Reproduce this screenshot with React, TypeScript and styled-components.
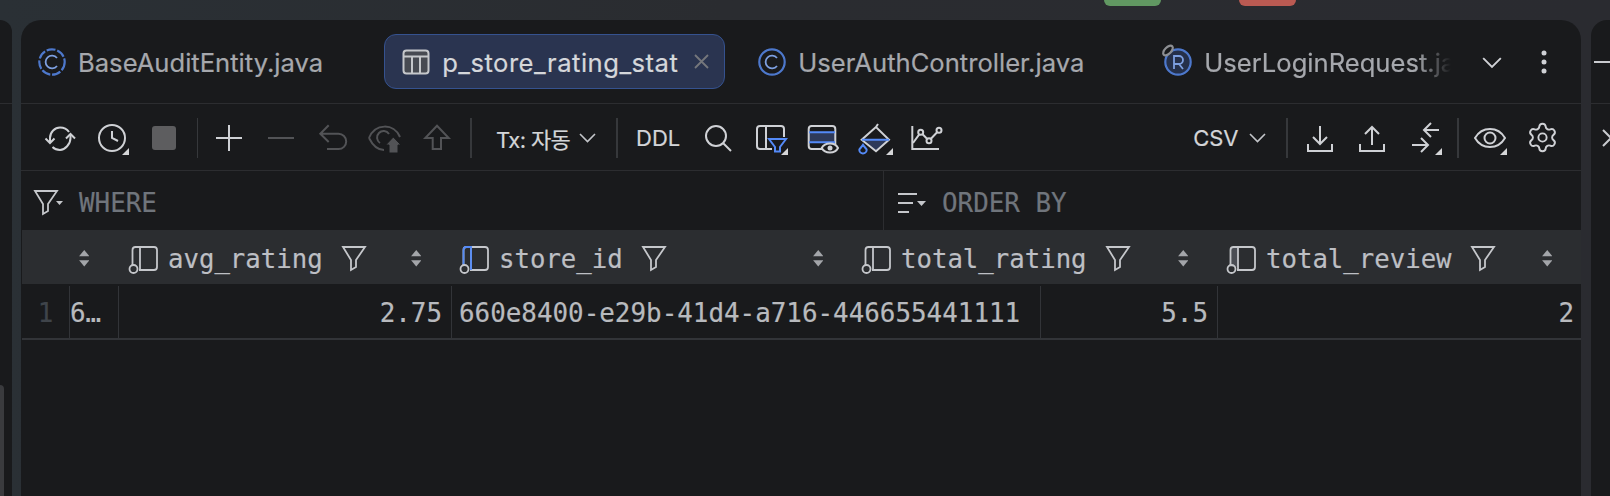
import React from "react";
import styled, { createGlobalStyle } from "styled-components";
import { Settings } from "lucide-react";

const Global = createGlobalStyle`
  html, body { margin: 0; padding: 0; height: 496px; overflow: hidden; }
  body {
    background: linear-gradient(90deg, #2a3035 0, #2a2c30 45%, #2a2b30 100%);
    font-family: Inter, "Noto Sans CJK KR", sans-serif;
    -webkit-text-stroke: 0.2px;
  }
  * { box-sizing: border-box; }
`;

const Page = styled.div`
  width: 1610px;
  height: 496px;
  display: flex;
  flex-direction: column;
  overflow: hidden;
`;
const TopBar = styled.div`
  height: 20px;
  flex: none;
  display: flex;
  align-items: flex-start;
  padding-left: 1104px;
  gap: 78px;
`;
const Chip = styled.div<{ $color: string }>`
  width: 57px;
  height: 6px;
  border-radius: 0 0 9px 9px;
  background: ${(p) => p.$color};
`;
const Panels = styled.div`
  flex: 1;
  display: flex;
  min-height: 0;
`;
const SidePanel = styled.div<{ $side: "left" | "right" }>`
  position: relative;
  flex: none;
  width: ${(p) => (p.$side === "left" ? "11.5px" : "19.5px")};
  margin-left: ${(p) => (p.$side === "left" ? "0" : "9.5px")};
  margin-right: ${(p) => (p.$side === "left" ? "9.5px" : "0")};
  background: #191a1c;
  border-radius: ${(p) => (p.$side === "left" ? "0 16px 0 0" : "16px 0 0 0")};
  overflow: hidden;
`;
const SideLine = styled.div`
  height: 83.5px;
  border-bottom: 1.5px solid #2c2d30;
`;
const SidePopup = styled.div`
  position: absolute;
  left: 0;
  top: 365px;
  bottom: 0;
  width: 4px;
  background: #3a3b3e;
  border-radius: 0 4px 0 0;
`;
const RightGlyphs = styled.div`
  position: absolute;
  left: 3px;
  top: 41px;
  width: 17px;
  height: 2px;
  background: #c9cbcf;
`;
const RightCross = styled.svg`
  position: absolute;
  left: 11px;
  top: 109px;
`;
const Main = styled.div`
  width: 1560px;
  flex: none;
  background: #191a1c;
  border-radius: 20px 20px 0 0;
  display: flex;
  flex-direction: column;
  overflow: hidden;
`;
const TabRow = styled.div`
  height: 83.5px;
  flex: none;
  padding: 14px 0 0 0;
  display: flex;
  align-items: flex-start;
  gap: 16px;
  border-bottom: 1.5px solid #2c2d30;
  position: relative;
`;
const Tab = styled.div<{ $active?: boolean }>`
  height: 55px;
  display: flex;
  align-items: center;
  gap: 12px;
  padding: 0 ${(p) => (p.$active ? "15px" : "44px")} 0 ${(p) => (p.$active ? "17px" : "16px")};
  border-radius: 12px;
  border: ${(p) => (p.$active ? "1.5px solid #35528f" : "1.5px solid transparent")};
  background: ${(p) => (p.$active ? "#2a3450" : "transparent")};
  color: ${(p) => (p.$active ? "#d5d7db" : "#a6a8ad")};
  font-size: 25.6px;
  letter-spacing: ${(p) => (p.$active ? "0.49px" : "0")};
  white-space: nowrap;
  flex: none;
`;
const TabText = styled.span`
  padding-top: 1px;
`;
const TabLast = styled(Tab)`
  padding-right: 0;
  margin-left: 2px;
`;
const FadedLabel = styled.span`
  width: 247px;
  padding-top: 1px;
  overflow: hidden;
  -webkit-mask-image: linear-gradient(90deg, #000 86%, transparent 100%);
  mask-image: linear-gradient(90deg, #000 86%, transparent 100%);
`;
const CloseWrap = styled.span`
  display: flex;
  margin-left: 4px;
`;
const TabActions = styled.div`
  position: absolute;
  right: 34px;
  top: 30px;
  display: flex;
  align-items: center;
  gap: 39px;
`;
const Toolbar = styled.div`
  height: 67.5px;
  flex: none;
  display: flex;
  align-items: center;
  padding: 2px 13px 0;
  border-bottom: 1.5px solid #2c2d30;
`;
const Cell = styled.div<{ $w?: number }>`
  width: ${(p) => p.$w ?? 52}px;
  height: 40px;
  flex: none;
  display: flex;
  align-items: center;
  justify-content: center;
`;
const Sep = styled.div<{ $l: number; $r: number }>`
  width: 1.5px;
  height: 40px;
  background: #36383b;
  flex: none;
  margin: 0 ${(p) => p.$r}px 0 ${(p) => p.$l}px;
`;
const Label = styled.span`
  font-size: 22px;
  color: #d3d5d8;
  white-space: nowrap;
  font-family: Inter, "Noto Sans CJK KR", sans-serif;
`;
const TxLabel = styled(Label)`
  letter-spacing: -0.6px;
  width: 73px;
`;
const CsvSlot = styled(Label)`
  margin-right: -1px;
`;
const Spacer = styled.div`
  flex: 1;
`;
const StopBox = styled.div`
  width: 24px;
  height: 24px;
  border-radius: 3px;
  background: #5d5d5f;
`;
const FilterRow = styled.div`
  height: 59px;
  flex: none;
  display: flex;
  font-family: "DejaVu Sans Mono", monospace;
  font-size: 25.9px;
  color: #70757c;
`;
const FilterPart = styled.div<{ $first?: boolean }>`
  display: flex;
  align-items: center;
  gap: 15px;
  padding: 5px 0 0 13px;
  ${(p) => (p.$first ? "width: 863px; border-right: 1.5px solid #2c2d30;" : "flex: 1;")}
`;
const HeaderRow = styled.div`
  height: 54px;
  margin-left: 1px;
  flex: none;
  display: grid;
  grid-template-columns: 47px 50px 331px 402px 365px 364px;
  background: #2b2d30;
`;
const HeadCell = styled.div`
  display: flex;
  align-items: center;
  padding: 3px 0 0 9.5px;
  color: #bdbfc4;
  font: 25.7px "DejaVu Sans Mono", monospace;
`;
const HeadText = styled.span`
  margin: 0 19.5px 0 10.5px;
  white-space: nowrap;
`;
const SortSlot = styled.div`
  margin-left: auto;
  margin-right: 29px;
  display: flex;
`;
const SortOnly = styled.div`
  display: flex;
`;
const DataRow = styled.div`
  height: 54px;
  margin: 2px 0 0 1px;
  flex: none;
  display: grid;
  grid-template-columns: 48px 49px 333px 589px 177px 364px;
  border-bottom: 2px solid #323438;
  color: #b8babe;
  font: 25.9px "DejaVu Sans Mono", monospace;
`;
const DataCell = styled.div<{ $align?: string; $last?: boolean }>`
  display: flex;
  align-items: center;
  justify-content: ${(p) => (p.$align === "right" ? "flex-end" : "flex-start")};
  padding: 2px ${(p) => (p.$last ? "8px" : "9px")} 0 7px;
  white-space: nowrap;
  border-right: ${(p) => (p.$last ? "none" : "1.5px solid #323438")};
`;
const RowNum = styled(DataCell)`
  padding: 2px 0 0;
  justify-content: center;
  color: #3f444a;
`;
const Short = styled(DataCell)`
  padding: 2px 0 0;
`;

const Ic = styled.svg<{ $c?: string; $sw?: number }>`
  fill: none;
  stroke: ${(p) => p.$c ?? "#cfd1d5"};
  stroke-width: ${(p) => p.$sw ?? 2};
  overflow: visible;
  flex: none;
`;
const ColSvg = styled(Ic)`
  margin-top: 2px;
`;

const blue = "#548af7";
const Corner = () => <polygon points="25,32 32,32 32,25" fill="#d5d6d8" stroke="none" />;

const ClassIcon = ({ dashed }: { dashed?: boolean }) => (
  <Ic width="28" height="28" viewBox="0 0 28 28" $c="#4d78cc" $sw={2.2}>
    <circle cx="14" cy="14" r="12.7" strokeDasharray={dashed ? "9 1.8" : undefined} />
    <path d="M19 10a6.400 6.400 0 1 0 0 8" stroke="#7d9fe0" strokeWidth={1.8} />
  </Ic>
);
const RecordIcon = () => (
  <Ic width="28" height="28" viewBox="0 0 28 28" $c="#4d78cc" $sw={2.2}>
    <circle cx="14" cy="14" r="12.7" fill="#25304a" />
    <path d="M10 21V8h5a4 4 0 0 1 0 8h-5M15 16l4 5" stroke="#7d9fe0" strokeWidth={1.8} />
    <ellipse cx="4" cy="2.500" rx="6" ry="3.200" transform="rotate(-45 4 2.500)" stroke="#8d8f93" fill="#191a1c" />
  </Ic>
);
const TableIcon = () => (
  <Ic width="28" height="26" viewBox="0 0 28 26" $c="#c5c7cb">
    <rect x="1.500" y="1.500" width="25" height="23" rx="3" fill="#474a52" />
    <path d="M1.500 7.500h25M10 7.500v17M18 7.500v17" />
  </Ic>
);
const X = () => (
  <Ic width="15" height="15" viewBox="0 0 15 15" $c="#75777c" $sw={1.8}>
    <path d="M1 1l13 13M14 1L1 14" />
  </Ic>
);
const Chevron = ({ w = 17, c = "#c3c5c9" }: { w?: number; c?: string }) => (
  <Ic width={w} height={w * 0.53} viewBox="0 0 17 9" $c={c} $sw={1.6}>
    <path d="M1 1l7.500 7.500L16 1" />
  </Ic>
);
const Dots = () => (
  <svg width="6" height="24" viewBox="0 0 6 24">
    <circle cx="3" cy="3" r="2.500" fill="#cfd1d5" />
    <circle cx="3" cy="12" r="2.500" fill="#cfd1d5" />
    <circle cx="3" cy="21" r="2.500" fill="#cfd1d5" />
  </svg>
);
const S = ({ c, children, w = 30 }: { c?: string; w?: number; children: React.ReactNode }) => (
  <Ic width={w} height="30" viewBox={`0 0 ${w} 30`} $c={c}>
    {children}
  </Ic>
);
const dim = "#525356";

const Sort = () => (
  <svg width="10.500" height="16.500" viewBox="0 0 10 16">
    <polygon points="0,6 5,0 10,6" fill="#a3a5a9" />
    <polygon points="0,10 5,16 10,10" fill="#a3a5a9" />
  </svg>
);
const Funnel = () => (
  <Ic width="24" height="25" viewBox="0 0 24 25" $c="#c5c7cb" $sw={1.8}>
    <path d="M1 1h22l-9 13v7l-5 3V14z" />
  </Ic>
);
const ColIcon = ({ tone }: { tone?: "blue" | "grey" }) => (
  <ColSvg width="29" height="29" viewBox="0 0 29 29" $c="#c5c7cb" $sw={1.8}>
    {tone === "grey" && <rect x="3.500" y="2" width="7.500" height="20" fill="#4a4d54" stroke="none" />}
    <path d="M3.500 20V5a3 3 0 0 1 3-3H25a3 3 0 0 1 3 3v17a3 3 0 0 1-3 3H10" />
    <path d="M11 2v23" />
    {tone === "blue" && <path d="M3.500 20V5a3 3 0 0 1 3-3H11v23" stroke={blue} />}
    <circle cx="4.500" cy="24" r="4" />
  </ColSvg>
);

const columns: { name: string; tone?: "blue" | "grey" }[] = [
  { name: "avg_rating" },
  { name: "store_id", tone: "blue" },
  { name: "total_rating" },
  { name: "total_review", tone: "grey" },
];

export default function App() {
  return (
    <Page>
      <Global />
      <TopBar>
        <Chip $color="#619862" />
        <Chip $color="#ba5a52" />
      </TopBar>
      <Panels>
        <SidePanel $side="left">
          <SideLine />
          <SidePopup />
        </SidePanel>
        <Main>
          <TabRow>
            <Tab>
              <ClassIcon dashed />
              <TabText>BaseAuditEntity.java</TabText>
            </Tab>
            <Tab $active>
              <TableIcon />
              <TabText>p_store_rating_stat</TabText>
              <CloseWrap>
                <X />
              </CloseWrap>
            </Tab>
            <Tab>
              <ClassIcon />
              <TabText>UserAuthController.java</TabText>
            </Tab>
            <TabLast>
              <RecordIcon />
              <FadedLabel>UserLoginRequest.java</FadedLabel>
            </TabLast>
            <TabActions>
              <Chevron w={20} c="#d0d2d6" />
              <Dots />
            </TabActions>
          </TabRow>
          <Toolbar>
            <Cell>
              <S>
                <path d="M5 20v-5C5 9 10 4.500 15 4.500C19 4.500 22 6 24 9" />
                <path d="M25.500 11v4C25.500 21 20 27 15 27C12 27 9.500 26 7.500 24" />
                <path d="M0.500 15.500L5 20l4.500-4.500M21 15.500l4.500-4.500 4.500 4.500" />
              </S>
            </Cell>
            <Cell>
              <S>
                <circle cx="15" cy="15" r="13" />
                <path d="M15 8v7l6 3" />
                <Corner />
              </S>
            </Cell>
            <Cell>
              <StopBox />
            </Cell>
            <Sep $l={6.5} $r={4.5} />
            <Cell>
              <S>
                <path d="M2 15h26M15 2v26" />
              </S>
            </Cell>
            <Cell>
              <S c={dim}>
                <path d="M2 15h26" />
              </S>
            </Cell>
            <Cell>
              <S c={dim}>
                <path d="M10.700 2.300L2.300 10.700 10.700 19M2.300 10.700H20.500a7.700 7.700 0 0 1 0 15.400H9" />
              </S>
            </Cell>
            <Cell>
              <S c={dim}>
                <path d="M-1 15C5 0 24 0 30 14" />
                <path d="M-1 15c4 8 9 12 15 12" />
                <path d="M10 20a6.500 6.500 0 1 1 9-9" />
                <polygon points="23.300,14 31,22 28,22 28,30 19,30 19,22 15.700,22" fill={dim} stroke="#191a1c" strokeWidth={1} />
              </S>
            </Cell>
            <Cell>
              <S c={dim}>
                <path d="M15 2.700L26.700 15H19v11h-8.300V15H3.300z" />
              </S>
            </Cell>
            <Sep $l={7.5} $r={24.5} />
            <TxLabel>Tx: 자동</TxLabel>
            <Cell $w={36}>
              <Chevron />
            </Cell>
            <Sep $l={11} $r={18.5} />
            <Label>DDL</Label>
            <Cell $w={76}>
              <S>
                <circle cx="13" cy="13" r="10" />
                <path d="M20 20l8 8" />
              </S>
            </Cell>
            <Cell $w={30}>
              <S>
                <path d="M16 26H4a3 3 0 0 1-3-3V6a3 3 0 0 1 3-3h21a3 3 0 0 1 3 3v8M10 3v23" />
                <path d="M13 16h17l-6 8v4.500h-5V24z" stroke={blue} fill="#191a1c" />
                <Corner />
              </S>
            </Cell>
            <Cell $w={72}>
              <S>
                <rect x="2" y="9" width="26" height="10" fill="#2e3a5a" stroke="none" />
                <rect x="1.700" y="3" width="26.600" height="23" rx="3" />
                <path d="M2 9.300h26M2 19.300h26" stroke={blue} />
                <path d="M14.700 25C18 19 28 19 31 25C28 31 18 31 14.700 25z" fill="#191a1c" />
                <circle cx="23" cy="25" r="2.500" fill="#cfd1d5" stroke="none" />
              </S>
            </Cell>
            <Cell $w={36}>
              <S>
                <polygon points="3,17 27,17 15,28" fill="#2e3a5a" stroke="none" />
                <path d="M15 4L0.700 16.700 15 28.300 28 16.700zM15 4l2-3" />
                <path d="M1 16.700h27" stroke={blue} />
                <path d="M2 21.700c-2 3-3.700 4.500-3.700 5a3.700 3.700 0 0 0 7.400 0c0-.5-1.700-2-3.700-5z" stroke={blue} fill="#191a1c" />
                <Corner />
              </S>
            </Cell>
            <Cell $w={64}>
              <S>
                <path d="M1.300 3v23H28" />
                <path d="M2 20l7.700-10.700L18 17.700 28 7.300" />
                <circle cx="9.700" cy="9.300" r="2.500" fill="#191a1c" />
                <circle cx="18" cy="17.700" r="2.500" fill="#191a1c" />
                <circle cx="28" cy="7.300" r="2.500" fill="#191a1c" />
              </S>
            </Cell>
            <Spacer />
            <CsvSlot>CSV</CsvSlot>
            <Cell $w={40}>
              <Chevron />
            </Cell>
            <Sep $l={8.5} $r={6.5} />
            <Cell>
              <S>
                <path d="M3 21v7h24v-7M15 3v18M8 14l7 7 7-7" />
              </S>
            </Cell>
            <Cell>
              <S>
                <path d="M3 21v7h24v-7M15 22V4M8 11l7-7 7 7" />
              </S>
            </Cell>
            <Cell $w={53}>
              <S>
                <path d="M29 7H14M21 0l-7 7 7 7" />
                <path d="M2 22h16M11 15l7 7-7 7" />
                <Corner />
              </S>
            </Cell>
            <Sep $l={6} $r={5.5} />
            <Cell>
              <S w={32}>
                <path d="M1 15C8 3 24 3 31 15C24 27 8 27 1 15z" />
                <circle cx="16" cy="15" r="5.500" />
                <polygon points="26,32 33,32 33,25" fill="#d5d6d8" stroke="none" />
              </S>
            </Cell>
            <Cell>
              <Settings size={33} color="#cfd1d5" strokeWidth={1.4} />
            </Cell>
          </Toolbar>
          <FilterRow>
            <FilterPart $first>
              <Ic width="30" height="26" viewBox="0 0 30 26" $c="#c5c7cb" $sw={1.8}>
                <path d="M1 1h22l-9 13v7l-5 3V14z" />
                <polygon points="22,11 29,11 25.500,15" fill="#c5c7cb" stroke="none" />
              </Ic>
              WHERE
            </FilterPart>
            <FilterPart>
              <Ic width="30" height="22" viewBox="0 0 30 22" $c="#c5c7cb">
                <path d="M1 2h19M1 11h15M1 20h11" />
                <polygon points="20,9 29,9 24.500,14" fill="#c5c7cb" stroke="none" />
              </Ic>
              ORDER BY
            </FilterPart>
          </FilterRow>
          <HeaderRow>
            <HeadCell />
            <HeadCell>
              <SortOnly>
                <Sort />
              </SortOnly>
            </HeadCell>
            {columns.map((c) => (
              <HeadCell key={c.name}>
                <ColIcon tone={c.tone} />
                <HeadText>{c.name}</HeadText>
                <Funnel />
                <SortSlot>
                  <Sort />
                </SortSlot>
              </HeadCell>
            ))}
          </HeaderRow>
          <DataRow>
            <RowNum>1</RowNum>
            <Short>6…</Short>
            <DataCell $align="right">2.75</DataCell>
            <DataCell>660e8400-e29b-41d4-a716-446655441111</DataCell>
            <DataCell $align="right">5.5</DataCell>
            <DataCell $align="right" $last>
              2
            </DataCell>
          </DataRow>
        </Main>
        <SidePanel $side="right">
          <SideLine />
          <RightGlyphs />
          <RightCross width="18" height="18" viewBox="0 0 18 18">
            <path d="M1 1l16 16M17 1L1 17" stroke="#c9cbcf" strokeWidth="2" />
          </RightCross>
        </SidePanel>
      </Panels>
    </Page>
  );
}
